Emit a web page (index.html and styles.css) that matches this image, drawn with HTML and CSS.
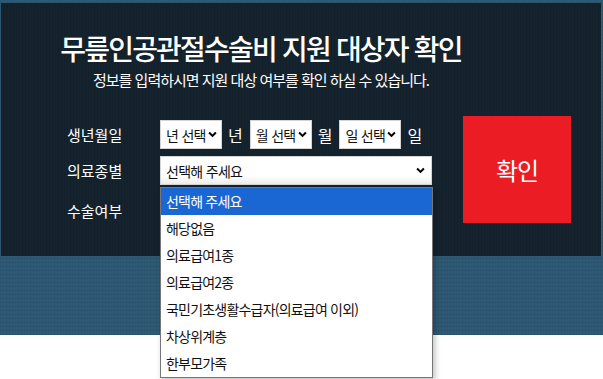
FILE: index.html
```html
<!DOCTYPE html>
<html lang="ko">
<head>
    <meta charset="UTF-8">
    <meta name="viewport" content="width=device-width, initial-scale=1.0">
    <title>무릎인공관절수술비 지원 대상자 확인</title>
    <link rel="stylesheet" href="styles.css">
</head>
<body>
    <div class="hero">
        <div class="panel">
            <div class="intro">
                <h1>무릎인공관절수술비 지원 대상자 확인</h1>
                <p>정보를 입력하시면 지원 대상 여부를 확인 하실 수 있습니다.</p>
            </div>

            <div class="form-area">
                <div class="rows">
                    <div class="row">
                        <span class="label">생년월일</span>
                        <div class="field">
                            <div class="select small">
                                <span>년 선택</span>
                                <svg class="chev" viewBox="0 0 10 7"><path d="M1.2 1.3 5 5.1 8.8 1.3"/></svg>
                            </div>
                            <span class="unit">년</span>
                            <div class="select small">
                                <span>월 선택</span>
                                <svg class="chev" viewBox="0 0 10 7"><path d="M1.2 1.3 5 5.1 8.8 1.3"/></svg>
                            </div>
                            <span class="unit">월</span>
                            <div class="select small">
                                <span>일 선택</span>
                                <svg class="chev" viewBox="0 0 10 7"><path d="M1.2 1.3 5 5.1 8.8 1.3"/></svg>
                            </div>
                            <span class="unit">일</span>
                        </div>
                    </div>
                    <div class="row">
                        <span class="label">의료종별</span>
                        <div class="field">
                            <div class="select wide open">
                                <span>선택해 주세요</span>
                                <svg class="chev" viewBox="0 0 10 7"><path d="M1.2 1.3 5 5.1 8.8 1.3"/></svg>
                            </div>
                        </div>
                    </div>
                    <div class="row last">
                        <span class="label">수술여부</span>
                    </div>
                </div>

                <button class="submit-btn" type="button">확인</button>
            </div>

            <!-- open dropdown of 의료종별 -->
            <ul class="dropdown">
                <li class="active">선택해 주세요</li>
                <li>해당없음</li>
                <li>의료급여1종</li>
                <li>의료급여2종</li>
                <li>국민기초생활수급자(의료급여 이외)</li>
                <li>차상위계층</li>
                <li>한부모가족</li>
            </ul>
        </div>
    </div>
    <div class="page-rest"></div>
</body>
</html>
```

FILE: styles.css
```css
* {
    margin: 0;
    padding: 0;
    box-sizing: border-box;
}

html, body {
    min-height: 100%;
}

body {
    font-family: "Noto Sans CJK KR", "Noto Sans", sans-serif;
    background: #fff;
    color: #fff;
}

.hero {
    position: relative;
    z-index: 1;
    height: 335px;
    padding: 3px 2px 0 1px;
    background-color: #2e5a76;
    background-image:
        repeating-linear-gradient(0deg, rgba(0, 0, 0, 0.06) 0 1px, transparent 1px 4px),
        repeating-linear-gradient(90deg, rgba(0, 0, 0, 0.04) 0 1px, transparent 1px 3px);
}

.panel {
    position: relative;
    height: 253px;
    background-color: #15232e;
    background-image:
        repeating-linear-gradient(90deg, rgba(0, 0, 0, 0.08) 0 1px, transparent 1px 3px);
}

.intro {
    width: 520px;
    text-align: center;
    padding-top: 26px;
}

.intro h1 {
    font-size: 28px;
    font-weight: 500;
    letter-spacing: -1.8px;
    line-height: 38px;
}

.intro p {
    font-size: 15px;
    letter-spacing: -1px;
    line-height: 22px;
    margin-top: 2px;
}

.form-area {
    display: flex;
    align-items: flex-start;
    padding: 29px 30px 0 66px;
}

.rows {
    flex: 1;
}

.row {
    display: flex;
    align-items: center;
    height: 29px;
    margin-bottom: 7px;
}

.row.last {
    margin-top: 11px;
}

.label {
    width: 93px;
    font-size: 15px;
}

.field {
    display: flex;
    align-items: center;
}

.select {
    display: flex;
    align-items: center;
    justify-content: space-between;
    height: 29px;
    padding: 0 4px 0 5px;
    background: #fff;
    border: 1px solid #d4d4d4;
    color: #111;
    font-size: 14px;
    letter-spacing: -0.7px;
}

.select.small {
    width: 62px;
}

.select.wide {
    width: 272px;
    padding-right: 6px;
}

.select.open {
    background: linear-gradient(#fff 70%, #ececec);
}

.chev {
    width: 9px;
    height: 7px;
    fill: none;
    stroke: #000;
    stroke-width: 2.2;
}

.unit {
    font-size: 16px;
    margin: 0 7px 0 6px;
}

.submit-btn {
    width: 108px;
    height: 107px;
    margin-top: -4px;
    border: none;
    background: #ec1c24;
    color: #fff;
    font-family: inherit;
    font-size: 24px;
    letter-spacing: -1px;
    cursor: pointer;
}

.dropdown {
    position: absolute;
    left: 159px;
    top: 184px;
    width: 273px;
    list-style: none;
    background: #fff;
    border: 1px solid #767676;
    box-shadow: 2px 3px 6px rgba(0, 0, 0, 0.25);
}

.dropdown li {
    height: 27px;
    line-height: 27px;
    padding-left: 5px;
    color: #111;
    font-size: 14px;
    letter-spacing: -0.8px;
}

.dropdown li.active {
    background: #1a66d2;
    color: #fff;
}

.page-rest {
    height: 44px;
}
```
